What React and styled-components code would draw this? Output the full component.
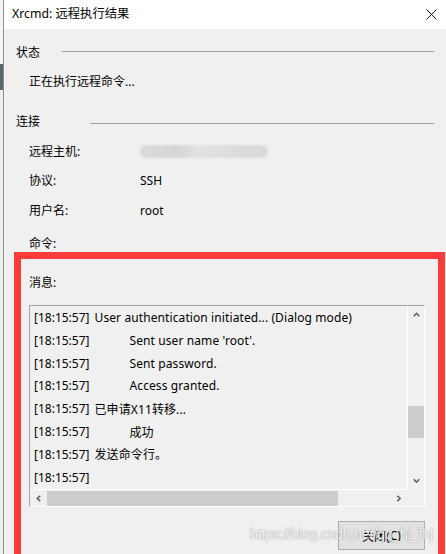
import React from 'react';
import styled, { createGlobalStyle } from 'styled-components';

const GlobalStyle = createGlobalStyle`
  html, body {
    margin: 0;
    padding: 0;
    width: 446px;
    height: 554px;
    overflow: hidden;
    background: #f0f0f0;
  }
  body {
    font-family: "Noto Sans", "Noto Sans CJK SC", sans-serif;
    font-size: 12px;
    color: #000;
  }
  #root { width: 446px; height: 554px; }
`;

const Screen = styled.div`
  position: relative;
  display: flex;
  width: 446px;
  height: 554px;
  overflow: hidden;
`;

const OuterEdge = styled.div`
  flex: none;
  width: 3px;
  border-right: 1px solid #8e8e8e;
  background: linear-gradient(
    to bottom,
    #f4f4f4 0px,
    #f4f4f4 64px,
    #5d6470 64px,
    #5d6470 90px,
    #efefef 90px
  );
`;

const Window = styled.div`
  flex: 1;
  min-width: 0;
  display: flex;
  flex-direction: column;
  background: #f0f0f0;
`;

const TitleBar = styled.div`
  flex: none;
  height: 29px;
  display: flex;
  align-items: center;
  padding: 0 9px 0 8px;
  background: #fff;
`;

const Title = styled.span`
  flex: 1;
  font-size: 12.3px;
  line-height: 1;
  white-space: nowrap;
`;

const CloseButton = styled.span`
  display: flex;
  width: 11px;
  height: 11px;
`;

const Body = styled.div`
  display: flex;
  flex-direction: column;
`;

const GroupHeader = styled.div`
  display: flex;
  align-items: center;
  height: 20px;
  margin-top: ${p => p.$top}px;
  padding: 0 12px;
`;

const GroupLabel = styled.span`
  flex: none;
  width: ${p => p.$width}px;
  white-space: nowrap;
`;

const GroupLine = styled.div`
  flex: 1;
  height: 1px;
  background: #a0a0a0;
  transform: translateY(${p => p.$shift}px);
`;

const StatusText = styled.div`
  height: 20px;
  display: flex;
  align-items: center;
  margin-top: 9px;
  padding-left: 25px;
`;

const InfoRow = styled.div`
  display: flex;
  align-items: center;
  height: ${p => p.$height || 20}px;
  margin-top: ${p => p.$top}px;
  padding-left: 25px;
`;

const InfoLabel = styled.span`
  flex: none;
  width: 111px;
`;

const Redacted = styled.span`
  display: block;
  width: 128px;
  height: 13px;
  border-radius: 6px;
  background: linear-gradient(
    to right,
    #dadada 0%,
    #d6d6d6 30%,
    #e2e2e2 45%,
    #dddddd 70%,
    #d9d9d9 100%
  );
  filter: blur(1.2px);
`;

const MessagePanel = styled.div`
  display: flex;
  flex-direction: column;
  margin: 0 1px 0 10px;
  border: 7px solid #fc3b3b;
  border-bottom: none;
  padding: 0 13px 0 8px;
  height: 302px;
`;

const PanelLabel = styled.div`
  height: 20px;
  display: flex;
  align-items: center;
  margin-top: 13px;
`;

const ListBox = styled.div`
  margin-top: 13px;
  height: 202px;
  box-sizing: border-box;
  border: 1px solid #fff;
  border-top-color: #a5a5a5;
  border-left-color: #a5a5a5;
  display: grid;
  grid-template-columns: 1fr 17px;
  grid-template-rows: 1fr 17px;
  background: #f0f0f0;
`;

const ListContent = styled.div`
  overflow: hidden;
  padding-left: 4px;
  white-space: nowrap;
`;

const LogRow = styled.div`
  height: 22.85px;
  display: flex;
  align-items: center;
`;

const Time = styled.span`
  flex: none;
`;

const Message = styled.span`
  margin-left: ${p => (p.$tab ? 40 : 5)}px;
  letter-spacing: 0.1px;
`;

const VScroll = styled.div`
  display: flex;
  flex-direction: column;
  border-left: 1px solid #fff;
  background: #f0f0f0;
`;

const HScroll = styled.div`
  display: flex;
  border-top: 1px solid #fff;
  background: #f0f0f0;
`;

const Corner = styled.div`
  background: #f0f0f0;
`;

const ArrowBox = styled.div`
  flex: none;
  width: ${p => (p.$horizontal ? 17 : 16)}px;
  height: ${p => (p.$horizontal ? 16 : 17)}px;
  display: flex;
  align-items: center;
  justify-content: center;
`;

const Track = styled.div`
  flex: 1;
  display: flex;
  flex-direction: ${p => (p.$horizontal ? 'row' : 'column')};
  align-items: stretch;
`;

const Thumb = styled.div`
  flex: none;
  background: #cdcdcd;
  ${p =>
    p.$horizontal
      ? `width: ${p.$size}px; margin-left: ${p.$offset}px; margin-top: 1px;`
      : `height: ${p.$size}px; margin-top: ${p.$offset}px; margin-left: 0;`}
`;

const Footer = styled.div`
  display: flex;
  justify-content: flex-end;
  margin-top: 14px;
`;

const Button = styled.button`
  width: 87px;
  height: 29px;
  box-sizing: border-box;
  border: 1px solid #adadad;
  background: #e1e1e1;
  font-family: inherit;
  font-size: 12px;
  color: #000;
  padding: 0;
  display: flex;
  align-items: center;
  justify-content: center;
`;

const Mnemonic = styled.span`
  text-decoration: underline;
`;

const Watermark = styled.div`
  position: absolute;
  left: 250px;
  top: 526px;
  font-family: "Liberation Sans", Arial, sans-serif;
  font-size: 14px;
  letter-spacing: -0.1px;
  color: rgba(255, 255, 255, 0.9);
  text-shadow: 0 0 1px rgba(80, 80, 80, 0.55), 0 0 2px rgba(140, 140, 140, 0.35);
  pointer-events: none;
  white-space: nowrap;
`;

const Chevron = ({ dir }) => {
  const pts = {
    up: '0.8,4.2 3.5,1.3 6.2,4.2',
    down: '0.8,1.3 3.5,4.2 6.2,1.3',
    left: '4.2,0.8 1.3,3.5 4.2,6.2',
    right: '1.3,0.8 4.2,3.5 1.3,6.2',
  }[dir];
  const horizontal = dir === 'left' || dir === 'right';
  return (
    <svg
      width={horizontal ? 5.5 : 7}
      height={horizontal ? 7 : 5.5}
      viewBox={horizontal ? '0 0 5.5 7' : '0 0 7 5.5'}
    >
      <polyline points={pts} fill="none" stroke="#606060" strokeWidth="1.6" />
    </svg>
  );
};

const logs = [
  { msg: 'User authentication initiated... (Dialog mode)' },
  { msg: "Sent user name 'root'.", tab: true },
  { msg: 'Sent password.', tab: true },
  { msg: 'Access granted.', tab: true },
  { msg: '已申请X11转移...' },
  { msg: '成功', tab: true },
  { msg: '发送命令行。' },
  { msg: '' },
];

export default function App() {
  return (
    <>
      <GlobalStyle />
      <Screen>
        <OuterEdge />
        <Window>
          <TitleBar>
            <Title>Xrcmd: 远程执行结果</Title>
            <CloseButton>
              <svg width="11" height="11" viewBox="0 0 11 11">
                <path d="M0.5 0.5 L10.5 10.5 M10.5 0.5 L0.5 10.5" stroke="#111" strokeWidth="1" />
              </svg>
            </CloseButton>
          </TitleBar>
          <Body>
            <GroupHeader $top={13}>
              <GroupLabel $width={46}>状态</GroupLabel>
              <GroupLine $shift={-1} />
            </GroupHeader>
            <StatusText>正在执行远程命令...</StatusText>

            <GroupHeader $top={20}>
              <GroupLabel $width={74}>连接</GroupLabel>
              <GroupLine $shift={2} />
            </GroupHeader>
            <InfoRow $top={10}>
              <InfoLabel>远程主机:</InfoLabel>
              <Redacted />
            </InfoRow>
            <InfoRow $top={9}>
              <InfoLabel>协议:</InfoLabel>
              <span>SSH</span>
            </InfoRow>
            <InfoRow $top={10}>
              <InfoLabel>用户名:</InfoLabel>
              <span>root</span>
            </InfoRow>
            <InfoRow $top={13} $height={19}>
              <InfoLabel>命令:</InfoLabel>
            </InfoRow>

            <MessagePanel>
              <PanelLabel>消息:</PanelLabel>
              <ListBox>
                <ListContent>
                  {logs.map((l, i) => (
                    <LogRow key={i}>
                      <Time>[18:15:57]</Time>
                      {l.msg && <Message $tab={l.tab}>{l.msg}</Message>}
                    </LogRow>
                  ))}
                </ListContent>
                <VScroll>
                  <ArrowBox>
                    <Chevron dir="up" />
                  </ArrowBox>
                  <Track>
                    <Thumb $size={32} $offset={83} />
                  </Track>
                  <ArrowBox>
                    <Chevron dir="down" />
                  </ArrowBox>
                </VScroll>
                <HScroll>
                  <ArrowBox $horizontal>
                    <Chevron dir="left" />
                  </ArrowBox>
                  <Track $horizontal>
                    <Thumb $horizontal $size={291} $offset={0} />
                  </Track>
                  <ArrowBox $horizontal>
                    <Chevron dir="right" />
                  </ArrowBox>
                </HScroll>
                <Corner />
              </ListBox>
              <Footer>
                <Button>
                  关闭(<Mnemonic>C</Mnemonic>)
                </Button>
              </Footer>
            </MessagePanel>
          </Body>
        </Window>
        <Watermark>https://blog.csdn.net/qq_hj_fhj</Watermark>
      </Screen>
    </>
  );
}
